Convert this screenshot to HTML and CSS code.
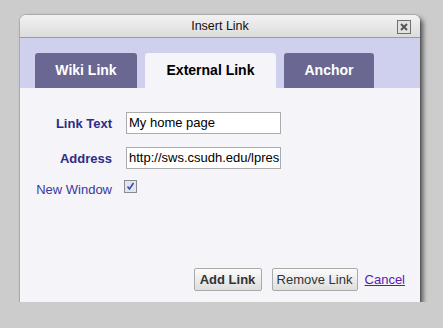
FILE: index.html
```html
<!DOCTYPE html>
<html lang="en">
<head>
  <meta charset="UTF-8">
  <title>Insert Link</title>
  <link rel="stylesheet" href="styles.css">
</head>
<body>
  <div class="dialog">
    <div class="dialog__title">
      <span>Insert Link</span>
      <span class="dialog__close">
        <svg width="14" height="14" viewBox="0 0 14 14">
          <rect x="0.5" y="0.5" width="13" height="13" fill="#e2e2e2" stroke="#6f6f6f"/>
          <path d="M4 4 L10 10 M10 4 L4 10" stroke="#555" stroke-width="2"/>
        </svg>
      </span>
    </div>

    <div class="tabs">
      <div class="tab">Wiki Link</div>
      <div class="tab tab--active">External Link</div>
      <div class="tab tab--last">Anchor</div>
    </div>

    <div class="panel">
      <div class="form">
        <label class="form__label">Link Text</label>
        <div class="form__input">My home page</div>
        <label class="form__label">Address</label>
        <div class="form__input">http://sws.csudh.edu/lpres</div>
        <label class="form__label form__label--plain">New Window</label>
        <span class="check">
          <svg width="13" height="13" viewBox="0 0 13 13">
            <rect x="0.5" y="0.5" width="12" height="12" fill="#e4e4ec" stroke="#8a8a96"/>
            <path d="M3.5 6.5 L5.5 9 L9.5 3" fill="none" stroke="#2d4fb0" stroke-width="1.6"/>
          </svg>
        </span>
      </div>

      <div class="actions">
        <button class="btn btn--bold">Add Link</button>
        <button class="btn btn--remove">Remove Link</button>
        <a class="cancel" href="#">Cancel</a>
      </div>
    </div>
  </div>
</body>
</html>
```

FILE: styles.css
```css
/* Reset */
*, *::after, *::before {
  margin: 0;
  padding: 0;
  box-sizing: border-box;
}

body {
  background-color: #cccccc;
  padding: 15px 0 0 20px;
  font-family: "Liberation Sans", Arial, sans-serif;
  font-size: 13px;
}

.dialog {
  width: 400px;
  height: 287px;
  display: flex;
  flex-direction: column;
  border-radius: 6px 6px 0 0;
  background-color: #f4f4f9;
  box-shadow: 0 0 0 1px rgba(0, 0, 0, 0.12), 3px 3px 5px rgba(0, 0, 0, 0.6);
  overflow: hidden;
}

.dialog__title {
  height: 23px;
  display: flex;
  align-items: center;
  justify-content: center;
  position: relative;
  font-size: 12.5px;
  color: #111;
  background-image: linear-gradient(to bottom, #f2f2f2, #dcdcdc);
  border-bottom: 1px solid #9c9c9c;
}

.dialog__close {
  position: absolute;
  top: 5px;
  right: 9px;
  height: 14px;
  line-height: 0;
}

.tabs {
  display: flex;
  gap: 8px;
  padding: 15px 0 0 15px;
  background-color: #cfcfee;
}

.tab {
  height: 35px;
  line-height: 35px;
  width: 102px;
  text-align: center;
  font-size: 14px;
  font-weight: bold;
  color: #fff;
  background-color: #6a6893;
  border-radius: 3px 3px 0 0;
}

.tab--active {
  width: 131px;
  color: #000;
  background-color: #f4f4f9;
}

.tab--last {
  width: 90px;
}

.panel {
  flex: 1;
  display: flex;
  flex-direction: column;
  padding: 24px 15px 11px 0;
}

.form {
  display: grid;
  grid-template-columns: 92px 155px;
  column-gap: 14px;
  row-gap: 13px;
  align-items: center;
}

.form__label {
  text-align: right;
  font-weight: bold;
  color: #2e2c86;
}

.form__label--plain {
  font-weight: normal;
  color: #3a38a0;
}

.form__input {
  height: 22px;
  line-height: 20px;
  padding: 0 2px;
  border: 1px solid #ababab;
  background-color: #fff;
  color: #000;
  white-space: nowrap;
  overflow: hidden;
}

.check {
  margin: -7px 0 0 -2px;
  height: 13px;
  line-height: 0;
}

.actions {
  margin-top: auto;
  display: flex;
  align-items: center;
  justify-content: flex-end;
}

.btn {
  height: 23px;
  padding: 0;
  white-space: nowrap;
  font-family: "Liberation Sans", Arial, sans-serif;
  font-size: 13px;
  color: #333;
  border: 1px solid #aaaaaa;
  border-radius: 2px;
  background-image: linear-gradient(to bottom, #fbfbfb, #dedede);
}

.btn--bold {
  width: 68px;
  font-weight: bold;
  margin-right: 10px;
}

.btn--remove {
  width: 86px;
  margin-right: 7px;
}

.cancel {
  color: #5a1ab0;
  text-decoration: underline;
}
```
